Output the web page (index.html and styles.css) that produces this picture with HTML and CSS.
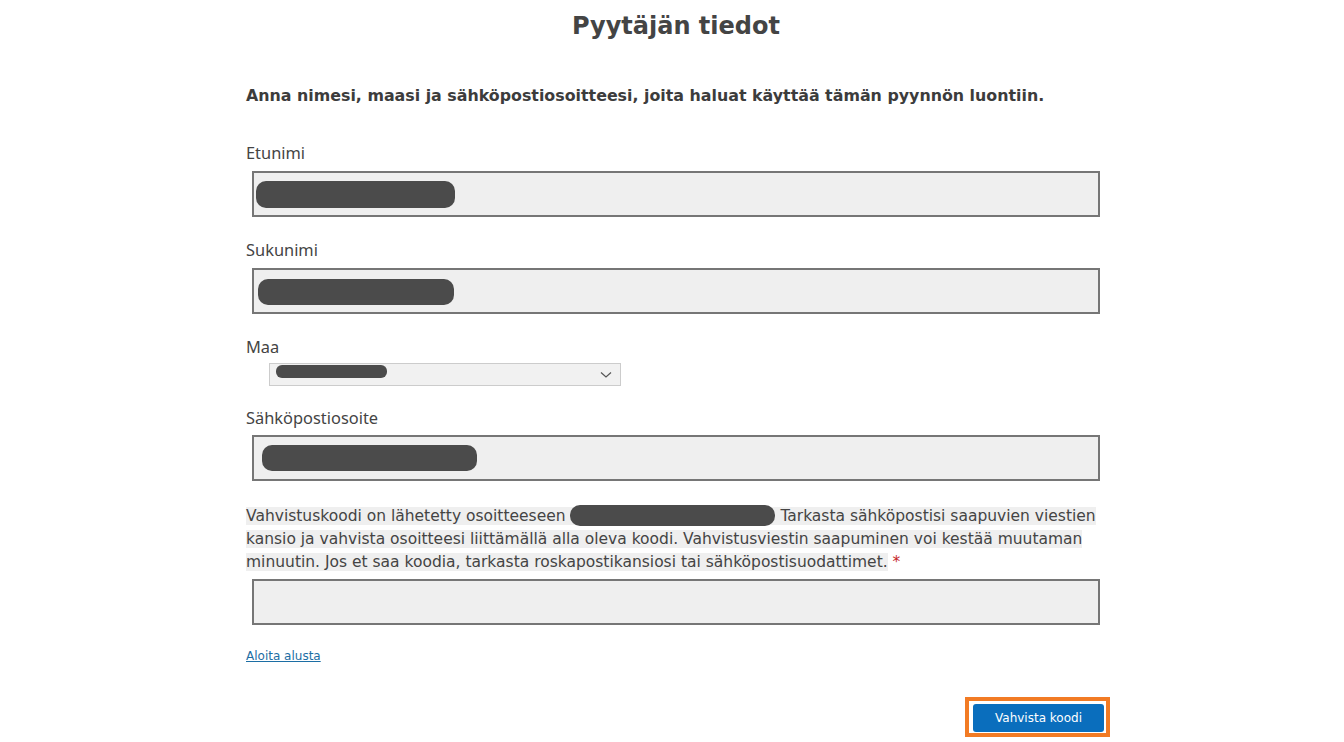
FILE: index.html
```html
<!DOCTYPE html>
<html lang="fi">
<head>
<meta charset="utf-8">
<title>Pyytäjän tiedot</title>
<link rel="stylesheet" href="styles.css">
</head>
<body>
<main class="page">
  <h1 class="title">Pyytäjän tiedot</h1>
  <p class="intro">Anna nimesi, maasi ja sähköpostiosoitteesi, joita haluat käyttää tämän pyynnön luontiin.</p>

  <div class="field">
    <label class="label">Etunimi</label>
    <div class="input"><span class="redact r-first"></span></div>
  </div>

  <div class="field">
    <label class="label">Sukunimi</label>
    <div class="input"><span class="redact r-last"></span></div>
  </div>

  <div class="field field-select">
    <label class="label">Maa</label>
    <div class="select">
      <span class="redact r-country"></span>
      <svg class="chevron" width="12" height="8" viewBox="0 0 12 8"><path d="M1 1.5 L6 6 L11 1.5" fill="none" stroke="#555" stroke-width="1.2"/></svg>
    </div>
  </div>

  <div class="field field-email">
    <label class="label">Sähköpostiosoite</label>
    <div class="input"><span class="redact r-email"></span></div>
  </div>

  <p class="notice"><span class="hl">Vahvistuskoodi on lähetetty osoitteeseen <span class="redact r-inline"></span> Tarkasta sähköpostisi saapuvien viestien</span><br><span class="hl">kansio ja vahvista osoitteesi liittämällä alla oleva koodi. Vahvistusviestin saapuminen voi kestää muutaman</span><br><span class="hl">minuutin. Jos et saa koodia, tarkasta roskapostikansiosi tai sähköpostisuodattimet.</span> <span class="req">*</span></p>
  <div class="input input-code"></div>

  <a class="restart" href="#">Aloita alusta</a>

  <div class="actions">
    <div class="highlight"><button class="btn" type="button">Vahvista koodi</button></div>
  </div>
</main>
</body>
</html>
```

FILE: styles.css
```css
html, body {
  margin: 0;
  padding: 0;
  background: #ffffff;
}

body {
  font-family: "DejaVu Sans", Verdana, sans-serif;
  color: #444444;
}

.page {
  width: 854px;
  margin: 0 0 0 246px;
  padding-top: 10px;
}

.title {
  margin: 0;
  padding-left: 6px;
  font-size: 24px;
  line-height: 32px;
  font-weight: bold;
  text-align: center;
  color: #444444;
}

.intro {
  margin: 44px 0 0;
  font-size: 15.85px;
  line-height: 20px;
  font-weight: bold;
  color: #3c3c3c;
}

.field {
  margin-top: 35px;
}

.field + .field {
  margin-top: 21px;
}

.label {
  display: block;
  padding-top: 2px;
  font-family: "Noto Sans", "Open Sans", sans-serif;
  font-size: 16.4px;
  line-height: 20px;
  color: #444444;
}

.input {
  box-sizing: border-box;
  margin: 8px 0 0 6px;
  width: 848px;
  height: 46px;
  border: 2px solid #767676;
  background: #efefef;
  padding: 8px 0 0 2px;
}

.redact {
  display: inline-block;
  background: #4b4b4b;
  border-radius: 10px;
  vertical-align: top;
}

.r-first { width: 199px; height: 27px; }
.r-last { width: 196px; height: 26px; margin-left: 2px; margin-top: 1px; }
.r-email { width: 215px; height: 26px; margin-left: 6px; }

.field-select .select {
  box-sizing: border-box;
  margin: 6px 0 0 23px;
  width: 352px;
  height: 23px;
  border: 1px solid #cccccc;
  background: #f1f1f1;
  display: flex;
  align-items: flex-start;
  justify-content: space-between;
  padding: 1px 8px 0 6px;
}

.r-country {
  width: 111px;
  height: 13px;
  border-radius: 6px;
}

.chevron {
  margin-top: 6px;
}

.field-email {
  margin-top: 20px !important;
}

.field-email .input {
  margin-top: 7px;
}

.notice {
  margin: 24px 0 0;
  font-size: 15.5px;
  line-height: 23px;
  color: #444444;
}

.hl {
  background: #efefef;
}

.r-inline {
  width: 205px;
  height: 21px;
  vertical-align: -5px;
}

.req {
  color: #c62828;
}

.input-code {
  margin-top: 5px;
  padding: 0;
}

.restart {
  display: inline-block;
  margin-top: 23px;
  font-size: 12px;
  line-height: 16px;
  color: #1c6ea4;
  text-decoration: underline;
}

.actions {
  display: flex;
  justify-content: flex-end;
  margin: 33px -10px 0 0;
}

.highlight {
  border: 4px solid #f27b24;
  padding: 3px 2px 1px 4px;
}

.btn {
  display: block;
  width: 131px;
  height: 28px;
  border: none;
  border-radius: 3px;
  background: #0a6ebd;
  color: #ffffff;
  font-family: "DejaVu Sans", Verdana, sans-serif;
  font-size: 12px;
  padding: 0;
}
```
